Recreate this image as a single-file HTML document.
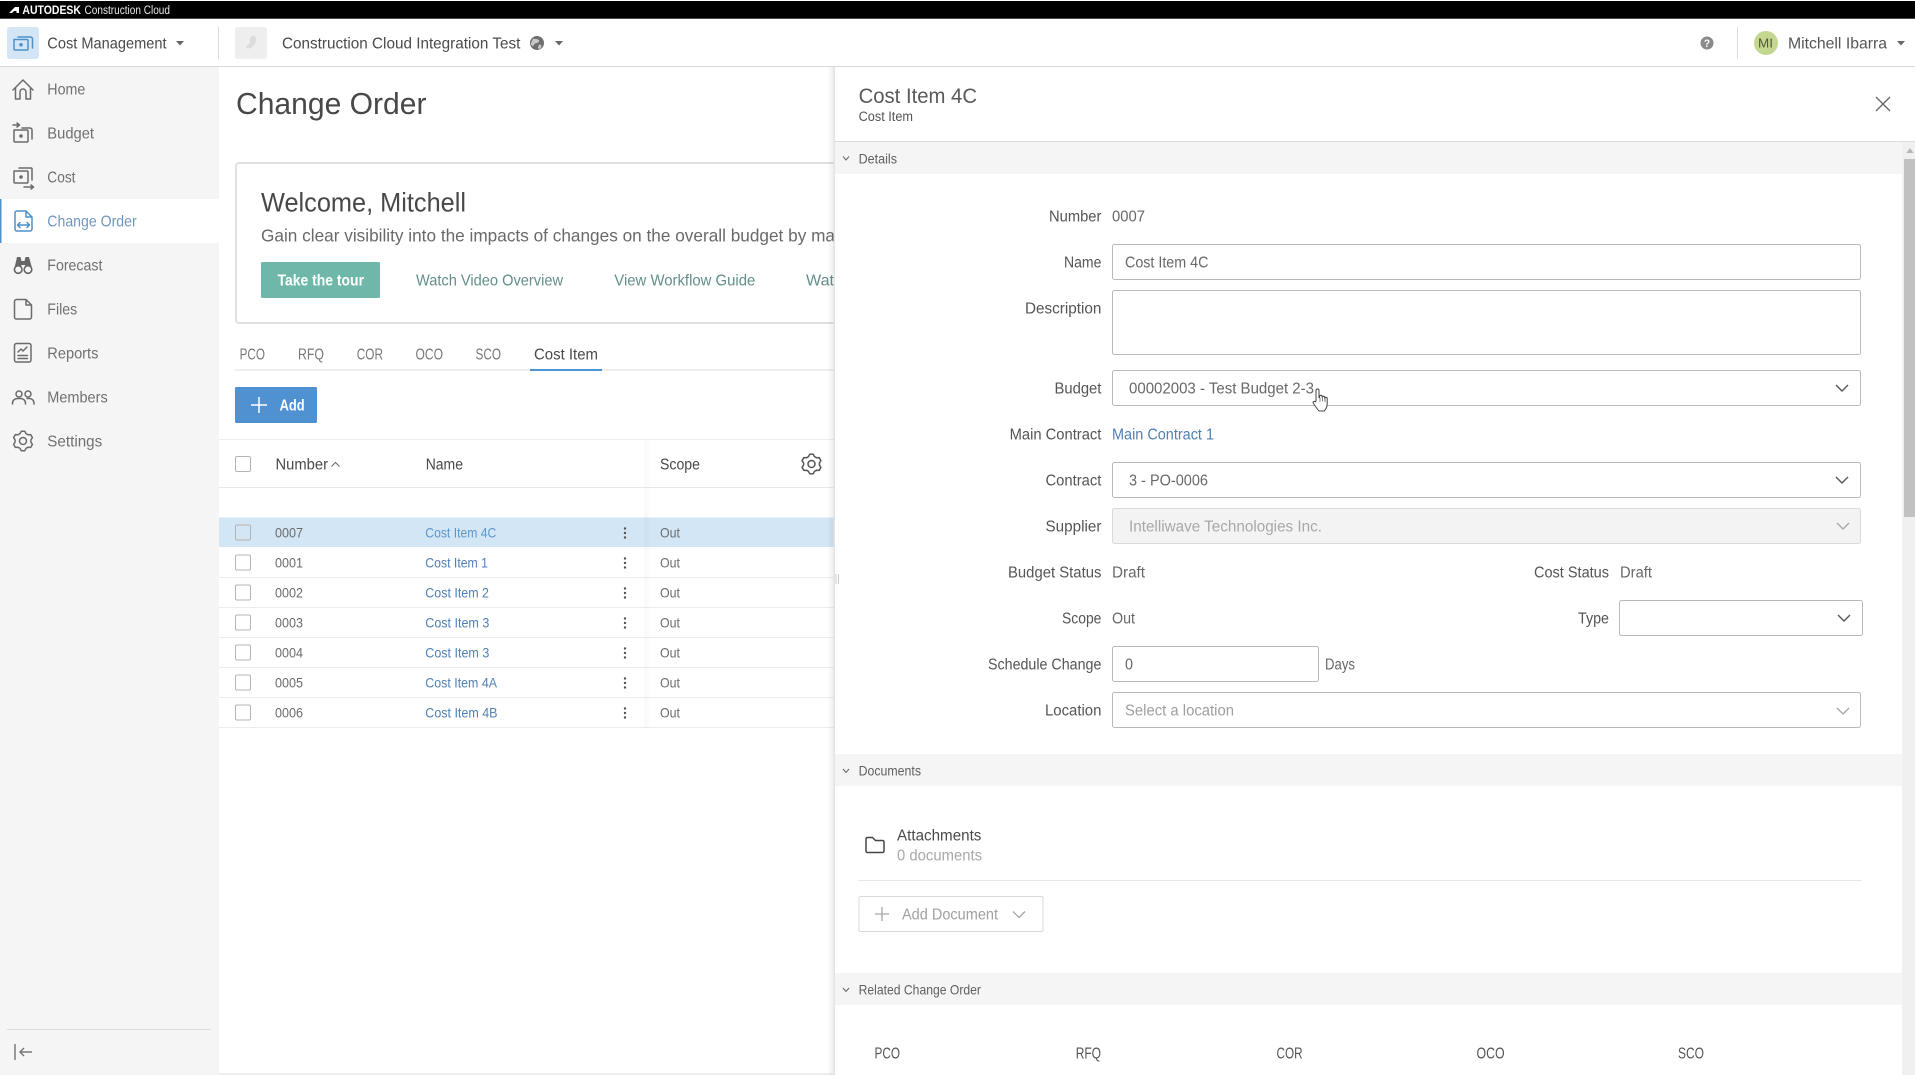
<!DOCTYPE html>
<html lang="en"><head><meta charset="utf-8"><title>Change Order</title>
<style>
html,body{margin:0;padding:0;background:#fff;width:1915px;height:1075px;overflow:hidden}
svg{display:block}
text{font-family:"Liberation Sans",sans-serif;font-size:15.5px;fill:#666;white-space:pre}
.nav{font-size:16px;fill:#707070}
.h{font-size:16px;fill:#4a4a4a}
.lab{font-size:15.5px;fill:#555}
.val{font-size:15.5px;fill:#686868}
.tab{font-size:15.5px;fill:#787878}
.num{font-size:14px;fill:#6c6c6c}
.lnk{font-size:14px;fill:#5080b4}
.th{font-size:15.5px;fill:#4a4a4a}
.sec{font-size:14px;fill:#606060}
.box{fill:#fff;stroke:#b9b9b9;stroke-width:1}
.cb{fill:#fff;stroke:#b4b4b4;stroke-width:1}
.ic{fill:none;stroke:#6b6b6b;stroke-width:1.5;stroke-linecap:round;stroke-linejoin:round}
.chev{fill:none;stroke:#555;stroke-width:1.4}
.chl{fill:none;stroke:#a5a5a5;stroke-width:1.3}
.sc{fill:none;stroke:#666;stroke-width:1}
</style></head><body>
<svg xmlns="http://www.w3.org/2000/svg" width="1915" height="1075" viewBox="0 0 1915 1075">
<defs>
<linearGradient id="sh" x1="0" x2="1" y1="0" y2="0"><stop offset="0" stop-color="#000" stop-opacity="0"/><stop offset="1" stop-color="#000" stop-opacity=".07"/></linearGradient>
<linearGradient id="sh2" x1="0" x2="1" y1="0" y2="0"><stop offset="0" stop-color="#000" stop-opacity=".03"/><stop offset="1" stop-color="#000" stop-opacity="0"/></linearGradient>
</defs>
<rect width="1915" height="1075" fill="#fff"/>

<!-- sidebar -->
<rect x="0" y="67" width="219" height="1008" fill="#f5f5f5"/>
<rect x="0" y="199" width="219" height="44" fill="#fff"/>
<rect x="0" y="199" width="1.5" height="44" fill="#4f90c8"/>
<text class="nav" x="47.3" y="94.500" textLength="38" lengthAdjust="spacingAndGlyphs">Home</text>
<text class="nav" x="47.3" y="138.500" textLength="46.700" lengthAdjust="spacingAndGlyphs">Budget</text>
<text class="nav" x="47.3" y="182.500" textLength="28.200" lengthAdjust="spacingAndGlyphs">Cost</text>
<text class="nav" x="47.3" y="226.500" textLength="89.400" lengthAdjust="spacingAndGlyphs" style="fill:#6f97c4">Change Order</text>
<text class="nav" x="47.3" y="270.500" textLength="55.100" lengthAdjust="spacingAndGlyphs">Forecast</text>
<text class="nav" x="47.3" y="314.500" textLength="29.900" lengthAdjust="spacingAndGlyphs">Files</text>
<text class="nav" x="47.3" y="358.500" textLength="51.100" lengthAdjust="spacingAndGlyphs">Reports</text>
<text class="nav" x="47.3" y="402.500" textLength="60.400" lengthAdjust="spacingAndGlyphs">Members</text>
<text class="nav" x="47.3" y="446.500" textLength="54.900" lengthAdjust="spacingAndGlyphs">Settings</text>
<!-- home -->
<path class="ic" d="M13 90L23 80L33 90M15.5 88V99H20V92a3 3 0 0 1 6 0V99H30.5V88"/>
<!-- budget -->
<path class="ic" d="M13 125H19M17 123L19.5 125L17 127M14 130H27a1 1 0 0 1 1 1V141a1 1 0 0 1-1 1H15a1 1 0 0 1-1-1ZM22 128H30a2 2 0 0 1 2 2V139"/>
<circle cx="21" cy="136" r="1.8" fill="#6b6b6b"/>
<!-- cost -->
<path class="ic" d="M14 171H27a1 1 0 0 1 1 1V182a1 1 0 0 1-1 1H15a1 1 0 0 1-1-1ZM19 168H31a1 1 0 0 1 1 1V180M24 187H33M31 185L33.5 187L31 189"/>
<circle cx="21" cy="177" r="1.8" fill="#6b6b6b"/>
<!-- change order -->
<path d="M15 213a2 2 0 0 1 2-2H26L32 217V229a2 2 0 0 1-2 2H17a2 2 0 0 1-2-2ZM26 211V217H32M18 225H29M20 222.5L17.5 225L20 227.5M27 222.5L29.5 225L27 227.5" fill="none" stroke="#4f90c8" stroke-width="1.5" stroke-linejoin="round" stroke-linecap="round"/>
<!-- forecast -->
<path d="M17 257h3.500l1 4h3l1-4H29l3 11h-6l-1-3h-3.500l-1 3h-6Z" fill="#666"/>
<circle cx="18.200" cy="269.500" r="3.800" fill="#f5f5f5" stroke="#666" stroke-width="1.600"/>
<circle cx="28" cy="269.500" r="3.800" fill="#f5f5f5" stroke="#666" stroke-width="1.600"/>
<!-- files -->
<path class="ic" d="M14.500 301.500a2 2 0 0 1 2-2H26L31.500 305V317a2 2 0 0 1-2 2h-13a2 2 0 0 1-2-2ZM26 299.500V305H31.500"/>
<!-- reports -->
<path class="ic" d="M14.500 345.500a2 2 0 0 1 2-2H29a2 2 0 0 1 2 2V360a2 2 0 0 1-2 2H16.500a2 2 0 0 1-2-2ZM18 352L21 349L23 351L27 347M18 355.500H27.500M18 358.500H27.500"/>
<!-- members -->
<g class="ic"><circle cx="19" cy="394" r="3"/><circle cx="28" cy="394" r="3"/><path d="M12.500 404V403a5 4.500 0 0 1 5-4.500h3a5 4.500 0 0 1 5 4.500v1M27 398.500h2.500a4.500 4.500 0 0 1 4.500 4.500v1"/></g>
<!-- settings -->
<g class="ic" transform="translate(23 441)"><path d="M-3-7.400L-1.700-9.800H1.700L3-7.400L4.900-6.300L7.700-6.400L9.400-3.400L7.900-1.100V1.100L9.400 3.400L7.700 6.400L4.900 6.300L3 7.400L1.700 9.800H-1.700L-3 7.400L-4.900 6.300L-7.700 6.400L-9.400 3.400L-7.900 1.100V-1.100L-9.400-3.400L-7.700-6.400L-4.900-6.300Z"/><circle r="3.500"/></g>
<!-- collapse -->
<rect x="7" y="1029" width="204" height="1" fill="#dcdcdc"/>
<path d="M15 1044V1060" stroke="#7a7a7a" stroke-width="1.500" fill="none"/>
<path d="M32 1052H20M24 1048L20 1052L24 1056" stroke="#7a7a7a" stroke-width="1.500" fill="none"/>

<!-- main -->
<text x="236" y="114" textLength="190.500" lengthAdjust="spacingAndGlyphs" style="font-size:31px;fill:#484848">Change Order</text>
<rect x="236" y="163" width="700" height="160" rx="3" fill="#fff" stroke="#e0e0e0" stroke-width="2"/>
<text x="261" y="211.500" textLength="205" lengthAdjust="spacingAndGlyphs" style="font-size:26.500px;fill:#484848">Welcome, Mitchell</text>
<text x="261" y="241.500" textLength="574" lengthAdjust="spacingAndGlyphs" style="font-size:17.500px;fill:#696969">Gain clear visibility into the impacts of changes on the overall budget by ma</text>
<rect x="261" y="262" width="119" height="36" rx="1.500" fill="#6fb8a9"/>
<text x="277.500" y="285.500" textLength="86.500" lengthAdjust="spacingAndGlyphs" style="font-size:16px;fill:#fff;font-weight:bold">Take the tour</text>
<text x="416" y="285.500" textLength="147" lengthAdjust="spacingAndGlyphs" style="font-size:16px;fill:#628f8a">Watch Video Overview</text>
<text x="614.300" y="285.500" textLength="141" lengthAdjust="spacingAndGlyphs" style="font-size:16px;fill:#628f8a">View Workflow Guide</text>
<text x="806" y="285.500" textLength="28" lengthAdjust="spacingAndGlyphs" style="font-size:16px;fill:#628f8a">Wat</text>

<text class="tab" x="239.600" y="359.500" textLength="25.400" lengthAdjust="spacingAndGlyphs">PCO</text>
<text class="tab" x="298" y="359.500" textLength="26" lengthAdjust="spacingAndGlyphs">RFQ</text>
<text class="tab" x="356.700" y="359.500" textLength="26.300" lengthAdjust="spacingAndGlyphs">COR</text>
<text class="tab" x="415.500" y="359.500" textLength="27.500" lengthAdjust="spacingAndGlyphs">OCO</text>
<text class="tab" x="475.500" y="359.500" textLength="25.500" lengthAdjust="spacingAndGlyphs">SCO</text>
<text class="tab" x="534" y="359.500" textLength="64" lengthAdjust="spacingAndGlyphs" style="fill:#4a4a4a">Cost Item</text>
<rect x="235" y="369.500" width="600" height="1" fill="#dcdcdc"/>
<rect x="530" y="369" width="72" height="2" fill="#4f95d3"/>

<rect x="235" y="387" width="82" height="36" rx="1.500" fill="#4f91d1"/>
<path d="M259 397V413M251 405H267" stroke="#fff" stroke-width="1.500" fill="none"/>
<text x="279.600" y="410.500" textLength="25" lengthAdjust="spacingAndGlyphs" style="font-size:16px;fill:#fff;font-weight:bold">Add</text>

<!-- table -->
<rect x="219" y="439" width="615" height="1" fill="#eeeeee"/>
<rect x="219" y="487" width="615" height="1" fill="#e8e8e8"/>
<rect x="219" y="517.500" width="615" height="29.500" fill="#d3e6f5"/>
<g fill="#ececec">
<rect x="219" y="577" width="615" height="1"/><rect x="219" y="607" width="615" height="1"/><rect x="219" y="637" width="615" height="1"/><rect x="219" y="667" width="615" height="1"/><rect x="219" y="697" width="615" height="1"/><rect x="219" y="727" width="615" height="1"/>
</g>
<rect x="644.500" y="440" width="7" height="288" fill="url(#sh2)"/>
<rect class="cb" x="235.500" y="456.500" width="15" height="15" rx="1.500"/>
<text class="th" x="275.500" y="469.500" textLength="52.500" lengthAdjust="spacingAndGlyphs">Number</text>
<path d="M331.500 466.500L335.500 462.500L339.500 466.500" class="sc"/>
<text class="th" x="425.700" y="469.500" textLength="37.300" lengthAdjust="spacingAndGlyphs">Name</text>
<text class="th" x="660" y="469.500" textLength="40" lengthAdjust="spacingAndGlyphs">Scope</text>
<g class="ic" transform="translate(811.500 464)" style="stroke:#555"><path d="M-3-7.400L-1.700-9.800H1.700L3-7.400L4.900-6.300L7.700-6.400L9.400-3.400L7.900-1.100V1.100L9.400 3.400L7.700 6.400L4.900 6.300L3 7.400L1.700 9.800H-1.700L-3 7.400L-4.900 6.300L-7.700 6.400L-9.400 3.400L-7.900 1.100V-1.100L-9.400-3.400L-7.700-6.400L-4.900-6.300Z"/><circle r="3.500"/></g>

<g>
<rect class="cb" x="235.500" y="525" width="15" height="15" rx="1.500" style="fill:#d3e6f5"/>
<rect class="cb" x="235.500" y="555" width="15" height="15" rx="1.500"/>
<rect class="cb" x="235.500" y="585" width="15" height="15" rx="1.500"/>
<rect class="cb" x="235.500" y="615" width="15" height="15" rx="1.500"/>
<rect class="cb" x="235.500" y="645" width="15" height="15" rx="1.500"/>
<rect class="cb" x="235.500" y="675" width="15" height="15" rx="1.500"/>
<rect class="cb" x="235.500" y="705" width="15" height="15" rx="1.500"/>
</g>
<text class="num" x="275" y="537.500" textLength="28" lengthAdjust="spacingAndGlyphs">0007</text>
<text class="num" x="275" y="567.500" textLength="28" lengthAdjust="spacingAndGlyphs">0001</text>
<text class="num" x="275" y="597.500" textLength="28" lengthAdjust="spacingAndGlyphs">0002</text>
<text class="num" x="275" y="627.500" textLength="28" lengthAdjust="spacingAndGlyphs">0003</text>
<text class="num" x="275" y="657.500" textLength="28" lengthAdjust="spacingAndGlyphs">0004</text>
<text class="num" x="275" y="687.500" textLength="28" lengthAdjust="spacingAndGlyphs">0005</text>
<text class="num" x="275" y="717.500" textLength="28" lengthAdjust="spacingAndGlyphs">0006</text>
<text class="lnk" x="425.300" y="537.500" textLength="71" lengthAdjust="spacingAndGlyphs" style="fill:#5c97cc">Cost Item 4C</text>
<text class="lnk" x="425.300" y="567.500" textLength="62.700" lengthAdjust="spacingAndGlyphs">Cost Item 1</text>
<text class="lnk" x="425.300" y="597.500" textLength="63.700" lengthAdjust="spacingAndGlyphs">Cost Item 2</text>
<text class="lnk" x="425.300" y="627.500" textLength="64" lengthAdjust="spacingAndGlyphs">Cost Item 3</text>
<text class="lnk" x="425.300" y="657.500" textLength="64" lengthAdjust="spacingAndGlyphs">Cost Item 3</text>
<text class="lnk" x="425.300" y="687.500" textLength="71.700" lengthAdjust="spacingAndGlyphs">Cost Item 4A</text>
<text class="lnk" x="425.300" y="717.500" textLength="72.200" lengthAdjust="spacingAndGlyphs">Cost Item 4B</text>
<g fill="#555">
<circle cx="625" cy="528.500" r="1.200"/><circle cx="625" cy="533" r="1.200"/><circle cx="625" cy="537.500" r="1.200"/>
<circle cx="625" cy="558.500" r="1.200"/><circle cx="625" cy="563" r="1.200"/><circle cx="625" cy="567.500" r="1.200"/>
<circle cx="625" cy="588.500" r="1.200"/><circle cx="625" cy="593" r="1.200"/><circle cx="625" cy="597.500" r="1.200"/>
<circle cx="625" cy="618.500" r="1.200"/><circle cx="625" cy="623" r="1.200"/><circle cx="625" cy="627.500" r="1.200"/>
<circle cx="625" cy="648.500" r="1.200"/><circle cx="625" cy="653" r="1.200"/><circle cx="625" cy="657.500" r="1.200"/>
<circle cx="625" cy="678.500" r="1.200"/><circle cx="625" cy="683" r="1.200"/><circle cx="625" cy="687.500" r="1.200"/>
<circle cx="625" cy="708.500" r="1.200"/><circle cx="625" cy="713" r="1.200"/><circle cx="625" cy="717.500" r="1.200"/>
</g>
<text class="num" x="660" y="537.500" textLength="20" lengthAdjust="spacingAndGlyphs">Out</text>
<text class="num" x="660" y="567.500" textLength="20" lengthAdjust="spacingAndGlyphs">Out</text>
<text class="num" x="660" y="597.500" textLength="20" lengthAdjust="spacingAndGlyphs">Out</text>
<text class="num" x="660" y="627.500" textLength="20" lengthAdjust="spacingAndGlyphs">Out</text>
<text class="num" x="660" y="657.500" textLength="20" lengthAdjust="spacingAndGlyphs">Out</text>
<text class="num" x="660" y="687.500" textLength="20" lengthAdjust="spacingAndGlyphs">Out</text>
<text class="num" x="660" y="717.500" textLength="20" lengthAdjust="spacingAndGlyphs">Out</text>

<rect x="219" y="1073" width="615" height="2" fill="#eeeeee"/>

<!-- side panel -->
<rect x="827" y="66" width="7" height="1009" fill="url(#sh)"/>
<rect x="834" y="66" width="1081" height="1009" fill="#fff"/>
<rect x="833.500" y="66" width="1.500" height="1009" fill="#e4e4e4"/>
<path d="M836 574V584M838.500 574V584" stroke="#c8c8c8" stroke-width="1" fill="none"/>
<text x="858.600" y="103" textLength="118.400" lengthAdjust="spacingAndGlyphs" style="font-size:21px;fill:#5a5a5a">Cost Item 4C</text>
<text x="858.600" y="121" textLength="54.400" lengthAdjust="spacingAndGlyphs" style="font-size:13.500px;fill:#555">Cost Item</text>
<path d="M1876 97L1890 111M1890 97L1876 111" stroke="#666" stroke-width="1.300" fill="none"/>

<rect x="835" y="141" width="1080" height="1" fill="#dcdcdc"/>
<rect x="835" y="142" width="1067" height="32" fill="#f5f5f5"/>
<rect x="835" y="754" width="1067" height="32" fill="#f5f5f5"/>
<rect x="835" y="973" width="1067" height="32" fill="#f5f5f5"/>
<path d="M843 156.500L846 160L849 156.500" class="sc"/>
<path d="M843 769L846 772.500L849 769" class="sc"/>
<path d="M843 988L846 991.500L849 988" class="sc"/>
<text class="sec" x="858.600" y="163.500" textLength="38.400" lengthAdjust="spacingAndGlyphs">Details</text>
<text class="sec" x="858.600" y="775.500" textLength="62.400" lengthAdjust="spacingAndGlyphs">Documents</text>
<text class="sec" x="858.600" y="994.500" textLength="122.400" lengthAdjust="spacingAndGlyphs">Related Change Order</text>

<!-- scrollbar -->
<rect x="1902" y="142" width="13" height="933" fill="#f0f0f0"/>
<rect x="1904" y="159" width="11" height="358" fill="#c1c1c1"/>
<path d="M1910 148L1906.500 153H1913.500Z" fill="#b5b5b5"/>

<!-- form labels -->
<text class="lab" x="1049" y="221.500" textLength="52.400" lengthAdjust="spacingAndGlyphs">Number</text>
<text class="lab" x="1064" y="267.500" textLength="37.400" lengthAdjust="spacingAndGlyphs">Name</text>
<text class="lab" x="1025" y="313.500" textLength="76.400" lengthAdjust="spacingAndGlyphs">Description</text>
<text class="lab" x="1054.500" y="393.500" textLength="46.900" lengthAdjust="spacingAndGlyphs">Budget</text>
<text class="lab" x="1009.600" y="439.500" textLength="91.800" lengthAdjust="spacingAndGlyphs">Main Contract</text>
<text class="lab" x="1045.500" y="485.500" textLength="55.900" lengthAdjust="spacingAndGlyphs">Contract</text>
<text class="lab" x="1045.500" y="531.500" textLength="55.900" lengthAdjust="spacingAndGlyphs">Supplier</text>
<text class="lab" x="1008" y="577.500" textLength="93.400" lengthAdjust="spacingAndGlyphs">Budget Status</text>
<text class="lab" x="1062" y="623.500" textLength="39.400" lengthAdjust="spacingAndGlyphs">Scope</text>
<text class="lab" x="988" y="669.500" textLength="113.400" lengthAdjust="spacingAndGlyphs">Schedule Change</text>
<text class="lab" x="1045" y="715.500" textLength="56.400" lengthAdjust="spacingAndGlyphs">Location</text>
<text class="lab" x="1534" y="577.500" textLength="75" lengthAdjust="spacingAndGlyphs">Cost Status</text>
<text class="lab" x="1578" y="623.500" textLength="31" lengthAdjust="spacingAndGlyphs">Type</text>

<!-- form values -->
<text class="val" x="1112" y="221.500" textLength="33" lengthAdjust="spacingAndGlyphs">0007</text>
<rect class="box" x="1112.500" y="244.500" width="748" height="35" rx="2"/>
<text class="val" x="1125" y="267.500" textLength="83.400" lengthAdjust="spacingAndGlyphs">Cost Item 4C</text>
<rect class="box" x="1112.500" y="290.500" width="748" height="64" rx="2"/>
<rect class="box" x="1112.500" y="370.500" width="748" height="35" rx="2"/>
<text class="val" x="1129" y="393.500" textLength="185" lengthAdjust="spacingAndGlyphs">00002003 - Test Budget 2-3</text>
<path class="chev" d="M1836 385L1842 391L1848 385"/>
<text class="val" x="1112" y="439.500" textLength="102" lengthAdjust="spacingAndGlyphs" style="fill:#5080b4">Main Contract 1</text>
<rect class="box" x="1112.500" y="462.500" width="748" height="35" rx="2"/>
<text class="val" x="1129" y="485.500" textLength="79" lengthAdjust="spacingAndGlyphs">3 - PO-0006</text>
<path class="chev" d="M1836 477L1842 483L1848 477"/>
<rect x="1112.500" y="508.500" width="748" height="35" rx="2" fill="#f3f3f3" stroke="#dadada"/>
<text class="val" x="1129" y="531.500" textLength="193" lengthAdjust="spacingAndGlyphs" style="fill:#a8a8a8">Intelliwave Technologies Inc.</text>
<path class="chl" d="M1837 523L1843 529L1849 523"/>
<text class="val" x="1112" y="577.500" textLength="33" lengthAdjust="spacingAndGlyphs">Draft</text>
<text class="val" x="1620" y="577.500" textLength="32" lengthAdjust="spacingAndGlyphs">Draft</text>
<text class="val" x="1112" y="623.500" textLength="23" lengthAdjust="spacingAndGlyphs">Out</text>
<rect class="box" x="1619.500" y="600.500" width="243" height="35" rx="2"/>
<path class="chev" d="M1838 615L1844 621L1850 615"/>
<rect class="box" x="1112.500" y="646.500" width="206" height="35" rx="2"/>
<text class="val" x="1125" y="669.500" textLength="8" lengthAdjust="spacingAndGlyphs">0</text>
<text class="val" x="1325" y="669.500" textLength="30" lengthAdjust="spacingAndGlyphs">Days</text>
<rect class="box" x="1112.500" y="692.500" width="748" height="35" rx="2"/>
<text class="val" x="1125" y="715.500" textLength="109" lengthAdjust="spacingAndGlyphs" style="fill:#9f9f9f">Select a location</text>
<path class="chl" d="M1837 708L1843 714L1849 708"/>

<!-- hand cursor -->
<path d="M1316 401V390.500a1.500 1.500 0 0 1 3 0V397.500h.6v-1a1.300 1.300 0 0 1 2.600 0v1a1.300 1.300 0 0 1 2.600 0v1a1.200 1.200 0 0 1 2.400 0v5c0 3.500-1.500 6-3 7.500h-5c-1.700-1.200-3.500-4.500-5.800-7.500c-1-1.500.6-2.800 2.100-1.700Z" fill="#fff" stroke="#444" stroke-width="1" stroke-linejoin="round"/>
<path d="M1320 398v3.500M1322.500 398v3.500M1325 398.500v3.500" stroke="#444" stroke-width=".7" fill="none"/>

<!-- documents -->
<path d="M866 839a1.500 1.500 0 0 1 1.500-1.500h5l3 3h7a1.500 1.500 0 0 1 1.500 1.500v9a1.500 1.500 0 0 1-1.500 1.500h-15a1.500 1.500 0 0 1-1.500-1.500Z" fill="none" stroke="#444" stroke-width="1.500" stroke-linejoin="round"/>
<text x="897" y="840.500" textLength="84.400" lengthAdjust="spacingAndGlyphs" style="font-size:15.500px;fill:#4a4a4a">Attachments</text>
<text x="897" y="860.500" textLength="85" lengthAdjust="spacingAndGlyphs" style="font-size:15.500px;fill:#a8a8a8">0 documents</text>
<rect x="858.600" y="880" width="1003" height="1" fill="#e8e8e8"/>
<rect x="859" y="896.500" width="184" height="35" rx="1.500" fill="#fff" stroke="#dadada"/>
<path d="M882 907V921M875 914H889" stroke="#a8a8a8" stroke-width="1.300" fill="none"/>
<text x="902" y="919.500" textLength="96" lengthAdjust="spacingAndGlyphs" style="font-size:16px;fill:#a0a0a0">Add Document</text>
<path class="chl" d="M1013 911.500L1019 917.500L1025 911.500"/>

<!-- related -->
<text class="lab" x="874.500" y="1058.500" textLength="25.500" lengthAdjust="spacingAndGlyphs">PCO</text>
<text class="lab" x="1075.700" y="1058.500" textLength="25.300" lengthAdjust="spacingAndGlyphs">RFQ</text>
<text class="lab" x="1276.500" y="1058.500" textLength="26.100" lengthAdjust="spacingAndGlyphs">COR</text>
<text class="lab" x="1476.500" y="1058.500" textLength="28.100" lengthAdjust="spacingAndGlyphs">OCO</text>
<text class="lab" x="1678" y="1058.500" textLength="26" lengthAdjust="spacingAndGlyphs">SCO</text>

<!-- header -->
<rect x="0" y="1" width="1915" height="17.700" fill="#000"/>
<path d="M9 13L15 7H19V13H16.500V11H14L12 13Z" fill="#fff"/>
<text x="22.400" y="14" textLength="58.600" lengthAdjust="spacingAndGlyphs" style="font-size:11.500px;fill:#fff;font-weight:bold">AUTODESK</text>
<text x="84.500" y="14" textLength="85.500" lengthAdjust="spacingAndGlyphs" style="font-size:11.500px;fill:#e8e8e8">Construction Cloud</text>

<rect x="0" y="19" width="1915" height="47" fill="#fff"/>
<rect x="0" y="66" width="1915" height="1" fill="#d8d8d8"/>
<rect x="7" y="27" width="32" height="32" rx="3" fill="#d4e6f5"/>
<path d="M14 39.500H27a1 1 0 0 1 1 1V49a1 1 0 0 1-1 1H15a1 1 0 0 1-1-1ZM18 37H30.500a2 2 0 0 1 2 2V48" fill="none" stroke="#4f90c8" stroke-width="1.500" stroke-linejoin="round" stroke-linecap="round"/>
<circle cx="21" cy="44.800" r="1.800" fill="#4f90c8"/>
<text class="h" x="47.300" y="48.500" textLength="119.200" lengthAdjust="spacingAndGlyphs">Cost Management</text>
<path d="M176 41H184L180 45.500Z" fill="#666"/>
<rect x="218" y="27" width="1" height="32" fill="#dcdcdc"/>
<rect x="235" y="27" width="32" height="32" rx="3" fill="#eeeeee"/>
<path d="M252 36c3-1 4 1 4 4c0 4-3 6-5 8c-2 1-6 0-5-2c2-1 4-2 4-5c0-2 0-4 2-5Z" fill="#dcdcdc"/>
<text class="h" x="282" y="48.500" textLength="238.400" lengthAdjust="spacingAndGlyphs">Construction Cloud Integration Test</text>
<circle cx="537" cy="43" r="7" fill="#6f6f6f"/>
<path d="M533 38.500c2 1 3 0 5 1s1 3-1 3.500s-3 1-3.500 2.500s-2 0-2.800-1.500M539 44.500c2 0 3 1 2 3s-3 1.500-3 0" fill="#c8c8c8"/>
<path d="M555 41H563L559 45.500Z" fill="#666"/>
<circle cx="1707" cy="43" r="6.500" fill="#8a8a8a"/>
<text x="1703.800" y="47" textLength="6.400" lengthAdjust="spacingAndGlyphs" style="font-size:11px;fill:#fff;font-weight:bold">?</text>
<rect x="1737" y="27" width="1" height="32" fill="#dcdcdc"/>
<circle cx="1766" cy="43" r="12" fill="#c4d78f"/>
<text x="1758" y="47.500" textLength="15" lengthAdjust="spacingAndGlyphs" style="font-size:13px;fill:#4f5a3c">MI</text>
<text class="h" x="1788" y="48.500" textLength="99" lengthAdjust="spacingAndGlyphs" style="fill:#555">Mitchell Ibarra</text>
<path d="M1897 41H1905L1901 45.500Z" fill="#666"/>
</svg>
</body></html>
